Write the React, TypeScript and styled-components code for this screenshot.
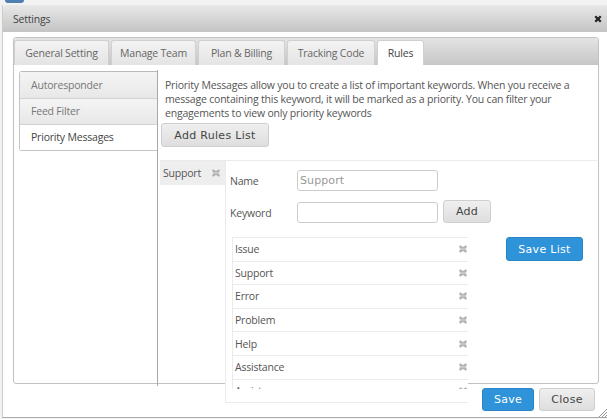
import React from "react";
import styled, { createGlobalStyle } from "styled-components";

const Global = createGlobalStyle`
  html, body { margin: 0; padding: 0; background: #fff; overflow: hidden; }
  * { box-sizing: border-box; }
  body {
    font-family: "Open Sans", "Noto Sans", sans-serif;
    font-size: 10.5px;
    letter-spacing: -0.2px;
    color: #555;
  }
`;

const Page = styled.div`
  width: 607px;
  height: 419px;
  overflow: hidden;
  background: #f2f2f2;
  padding: 5px 0 0 2px;
  position: relative;
`;
const Badge = styled.div`
  position: absolute;
  left: 5px;
  top: 0;
  width: 19px;
  height: 3px;
  background: #4d7fb0;
  border-radius: 0 0 3px 3px;
`;
const Window = styled.div`
  width: 605px;
  height: 413px;
  background: #fff;
  border-left: 1px solid #ccc;
  border-bottom: 1px solid #aaa;
  display: flex;
  flex-direction: column;
  position: relative;
`;
const TitleBar = styled.div`
  height: 27px;
  flex: none;
  background: linear-gradient(#e8e8e8, #c4c4c4);
  display: flex;
  align-items: center;
  justify-content: space-between;
  padding: 0 5px 0 10px;
  color: #444;
  border-radius: 3px 0 0 0;
`;
const Tabs = styled.div`
  margin: 5px 8px 0 10px;
  height: 347px;
  flex: none;
  border: 1px solid #c2c2c2;
  border-radius: 3px;
  display: flex;
  flex-direction: column;
`;
const TabBar = styled.div`
  height: 27px;
  flex: none;
  background: linear-gradient(#e4e4e4, #c6c6c6);
  display: flex;
  align-items: flex-end;
  gap: 2px;
  border-radius: 3px 3px 0 0;
`;
const Tab = styled.div<{ $active?: boolean; $w: number }>`
  width: ${(p) => p.$w}px;
  height: 25px;
  display: flex;
  align-items: center;
  justify-content: center;
  color: ${(p) => (p.$active ? "#444" : "#666")};
  background: ${(p) => (p.$active ? "#fff" : "linear-gradient(#f3f3f3, #e4e4e4)")};
  border: 1px solid #d0d0d0;
  border-bottom: none;
  border-radius: 3px 3px 0 0;
`;
const TabBody = styled.div`
  flex: 1;
  display: flex;
  min-height: 0;
`;
const SideNav = styled.div`
  width: 143px;
  flex: none;
  padding: 5px 0 0 5px;
`;
const SideList = styled.div`
  width: 138px;
  margin-top: 1px;
  border: 1px solid #c4c4c4;
  border-top-color: #bbb;
  border-right: none;
  border-radius: 3px 0 0 3px;
`;
const SideItem = styled.div<{ $active?: boolean }>`
  height: ${(p) => (p.$active ? 25 : 26.5)}px;
  padding-left: 11px;
  display: flex;
  align-items: center;
  color: ${(p) => (p.$active ? "#444" : "#777")};
  background: ${(p) => (p.$active ? "#fff" : "linear-gradient(#f4f4f4, #e8e8e8)")};
  border-bottom: 1px solid ${(p) => (p.$active ? "transparent" : "#d2d2d2")};
`;
const Content = styled.div`
  flex: 1;
  min-width: 0;
  height: 316px;
  margin-top: 5px;
  border-left: 1px solid #a8a8a8;
  padding-top: 8px;
`;
const Description = styled.p`
  margin: 0 0 3px 7px;
  width: 420px;
  line-height: 14px;
  color: #555;
`;
const Button = styled.button<{ $primary?: boolean; $w: number; $h: number }>`
  width: ${(p) => p.$w}px;
  height: ${(p) => p.$h}px;
  flex: none;
  padding: 0;
  font-family: "DejaVu Sans", sans-serif;
  font-size: 11px;
  letter-spacing: 0.3px;
  color: ${(p) => (p.$primary ? "#fff" : "#444")};
  background: ${(p) => (p.$primary ? "#2f93da" : "linear-gradient(#efefef, #dedede)")};
  border: 1px solid ${(p) => (p.$primary ? "#2a86c8" : "#cfcfcf")};
  border-radius: 3px;
`;
const AddRules = styled(Button)`
  display: block;
  margin-left: 3px;
`;
const Editor = styled.div`
  margin: 13px 0 0 2px;
  height: 243px;
  width: 437px;
  display: flex;
  align-items: flex-start;
  border-top: 1px solid #ebebeb;
`;
const ListNames = styled.div`
  width: 65px;
  flex: none;
`;
const NameRow = styled.div`
  height: 24px;
  background: #eee;
  padding: 0 5px 0 3px;
  display: flex;
  align-items: center;
  justify-content: space-between;
  color: #555;
`;
const EditColumn = styled.div`
  width: 243px;
  height: 242px;
  flex: none;
  background: #fff;
  border-left: 1px solid #ebebeb;
  border-bottom: 1px solid #ebebeb;
  padding: 9px 0 0 4px;
`;
const FieldRow = styled.div`
  display: flex;
  align-items: center;
  height: 21px;
  margin-bottom: 11px;
`;
const FieldLabel = styled.label`
  width: 67px;
  flex: none;
  color: #555;
`;
const TextInput = styled.input`
  width: 141px;
  height: 21px;
  flex: none;
  padding: 0 2px;
  font-family: "DejaVu Sans", sans-serif;
  font-size: 11px;
  letter-spacing: 0.1px;
  color: #555;
  background: #fff;
  border: 1px solid #ccc;
  border-radius: 3px;
  &::placeholder { color: #999; opacity: 1; }
`;
const AddButton = styled(Button)`
  margin: -2px 0 0 5px;
`;
const KeywordList = styled.div`
  margin: 14px 0 0 2px;
  width: 236px;
  height: 152px;
  overflow: hidden;
  border-top: 1px solid #ebebeb;
  border-left: 1px solid #ebebeb;
`;
const KeywordRow = styled.div`
  height: 23.6px;
  padding: 0 1px 0 2px;
  display: flex;
  align-items: center;
  justify-content: space-between;
  color: #555;
  border-bottom: 1px solid #ebebeb;
`;
const SaveColumn = styled.div`
  padding: 76px 0 0 38px;
`;
const Footer = styled.div`
  position: absolute;
  right: 12px;
  bottom: 6px;
  display: flex;
  gap: 5px;
`;
const Grip = styled.svg`
  position: absolute;
  right: 0;
  bottom: 0;
`;

const Remove = () => (
  <svg width={8} height={8} viewBox="0 0 8 8" aria-hidden="true">
    <path d="M1.2 0.3 4 2 6.8 0.3 8 1.6 6.8 3.4 6.8 4.6 8 6.4 6.8 7.7 4 6 1.2 7.7 0 6.4 1.2 4.6 1.2 3.4 0 1.6Z" fill="#b2b2b2" />
    <path d="M0.6 3.4H7.4V4.6H0.6Z" fill="#d6d6d6" />
  </svg>
);
const CloseIcon = () => (
  <svg width={8} height={8} viewBox="0 0 10 10" aria-hidden="true">
    <path d="M2.6 0.6 5 3 7.4 0.6 9.4 2.6 7 5 9.4 7.4 7.4 9.4 5 7 2.6 9.4 0.6 7.4 3 5 0.6 2.6Z" fill="#222" />
  </svg>
);

const keywords = ["Issue", "Support", "Error", "Problem", "Help", "Assistance", "Assist"];

export default function App() {
  return (
    <Page>
      <Global />
      <Badge />
      <Window>
        <TitleBar>
          <span>Settings</span>
          <CloseIcon />
        </TitleBar>
        <Tabs>
          <TabBar>
            <Tab $w={95}>General Setting</Tab>
            <Tab $w={85}>Manage Team</Tab>
            <Tab $w={87}>Plan &amp; Billing</Tab>
            <Tab $w={88}>Tracking Code</Tab>
            <Tab $w={47} $active>Rules</Tab>
          </TabBar>
          <TabBody>
            <SideNav>
              <SideList>
                <SideItem>Autoresponder</SideItem>
                <SideItem>Feed Filter</SideItem>
                <SideItem $active>Priority Messages</SideItem>
              </SideList>
            </SideNav>
            <Content>
              <Description>
                Priority Messages allow you to create a list of important keywords. When you receive a message containing this keyword, it will be marked as a priority. You can filter your engagements to view only priority keywords
              </Description>
              <AddRules $w={108} $h={24}>Add Rules List</AddRules>
              <Editor>
                <ListNames>
                  <NameRow>
                    <span>Support</span>
                    <Remove />
                  </NameRow>
                </ListNames>
                <EditColumn>
                  <FieldRow>
                    <FieldLabel>Name</FieldLabel>
                    <TextInput placeholder="Support" />
                  </FieldRow>
                  <FieldRow>
                    <FieldLabel>Keyword</FieldLabel>
                    <TextInput />
                    <AddButton $w={48} $h={23}>Add</AddButton>
                  </FieldRow>
                  <KeywordList>
                    {keywords.map((k) => (
                      <KeywordRow key={k}>
                        <span>{k}</span>
                        <Remove />
                      </KeywordRow>
                    ))}
                  </KeywordList>
                </EditColumn>
                <SaveColumn>
                  <Button $primary $w={77} $h={24}>Save List</Button>
                </SaveColumn>
              </Editor>
            </Content>
          </TabBody>
        </Tabs>
        <Footer>
          <Button $primary $w={52} $h={23}>Save</Button>
          <Button $w={56} $h={23}>Close</Button>
        </Footer>
        <Grip width="9" height="9" viewBox="0 0 9 9" aria-hidden="true">
          <path d="M1 9 9 1M4 9 9 4M7 9 9 7" stroke="#999" strokeWidth="1" />
        </Grip>
      </Window>
    </Page>
  );
}
